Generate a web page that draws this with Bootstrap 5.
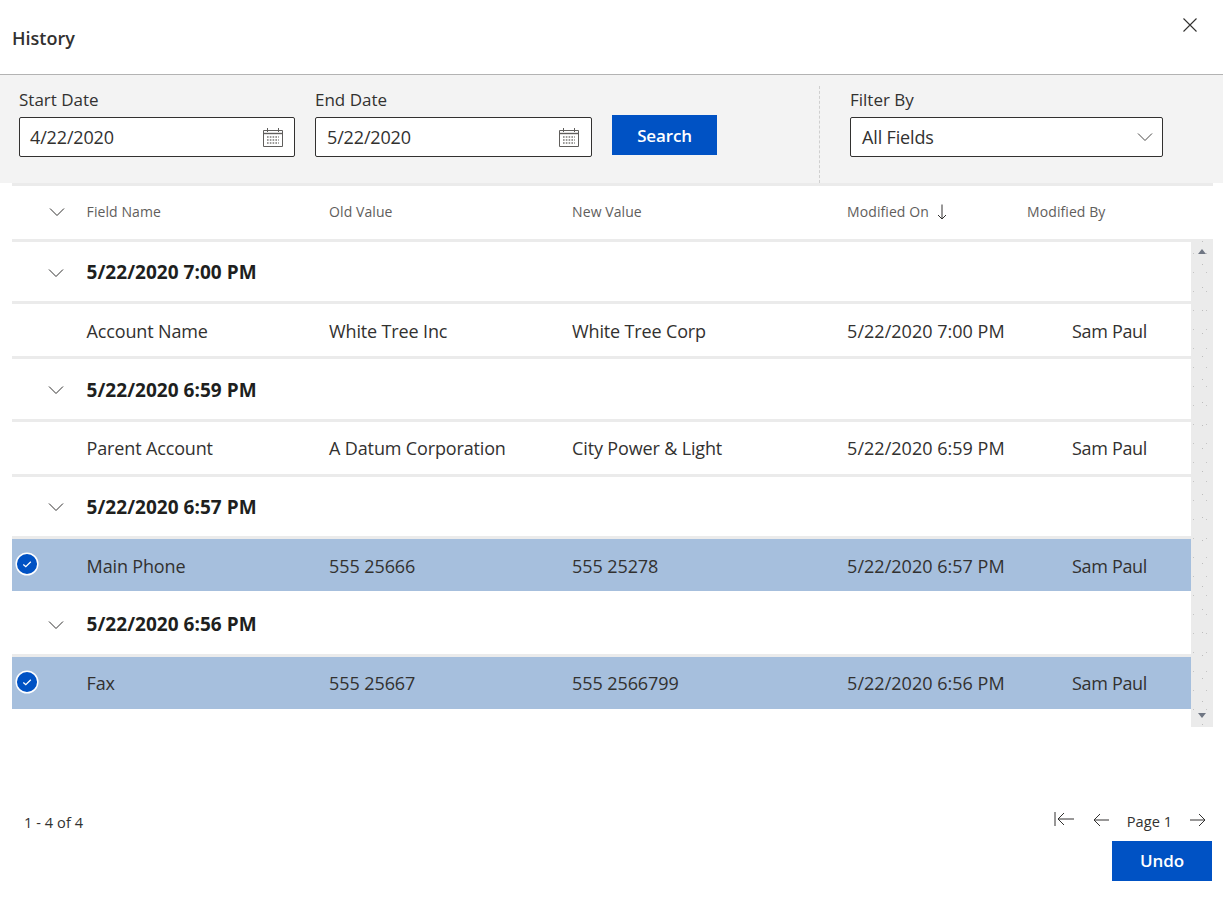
<!DOCTYPE html>
<html lang="en"><head><meta charset="utf-8"><title>History</title>
<link href="https://cdn.jsdelivr.net/npm/bootstrap@5.3.0/dist/css/bootstrap.min.css" rel="stylesheet">
<style>
html,body{height:910px;overflow:hidden;background:#fff}
body{font-family:"Open Sans","Noto Sans",sans-serif;color:#323130;font-size:17px;letter-spacing:-.15px}
.hist-head{height:74px;padding:0 12px}
.hist-title{font-size:18px;font-weight:600;margin:0;letter-spacing:0;line-height:77px;color:#323130}
.hist-close{background:none;border:0;padding:0;width:16px;height:16px;line-height:0;margin:17px 13px 0 0}
.hist-bar{height:109px;background:#f3f3f3;border-top:1px solid #b3b3b3;padding:0 0 0 19px}
.fld-label{font-size:17px;font-weight:500;line-height:24px;margin:13px 0 5px;color:#323130;letter-spacing:0}
.fld-box{height:40px;background:#fff;border:1px solid #323130;border-radius:2px;padding:0 11px 0 10px;font-size:18px;line-height:38px}
.w-start{width:276px;margin-right:20px;flex:none}.w-end{width:277px;margin-right:20px;flex:none}.w-filter{width:313px;flex:none}
.w-end .fld-box,.w-filter .fld-box{padding-left:11px}
.w-end .fld-box{padding-right:12px}.w-filter .fld-box{padding-right:9px}
.btn-ms{background:#0052c4;color:#fff;border:0;border-radius:0;font-weight:600;font-size:17px;height:40px;padding:0;letter-spacing:-.15px;flex:none}
.btn-ms:hover{background:#0052c4;color:#fff}
.btn-search{width:105px;margin-top:40px;padding-top:1px}
.vsep{border-left:1px dashed #cfcfcf;height:97px;margin:11px 30px 0 102px;flex:none}
.grid-wrap{margin:0 10px 0 12px;border-top:3px solid #ebebeb;height:59px;border-bottom:3px solid #ebebeb}
.col-hd{font-size:14px;color:#5f5e5c;letter-spacing:.08px;white-space:nowrap}
.hd-row{height:53px;padding-bottom:2px}
.gr-body{height:485px;margin:0 10px 0 12px}
.gr-list{width:1179px}
.gr-scroll{width:22px;background-color:#ebebeb;background-image:radial-gradient(circle,#bdbdbd .6px,transparent .8px),radial-gradient(circle,#c4c4c4 .6px,transparent .8px);background-size:17px 23px,13px 19px;background-position:3px 14px,9px 5px;margin-top:-3px;height:488px}
.tri-up,.tri-dn{width:0;height:0;border-left:4px solid transparent;border-right:4px solid transparent;display:block;margin:0 auto}
.tri-up{border-bottom:5px solid #6f7683;margin-top:10px}.tri-dn{border-top:5px solid #6f7683;margin-bottom:9px}
.group-row{height:59.4px;padding-top:1.8px;font-weight:700;font-size:19px;color:#201f1e;letter-spacing:.03px}
.data-row{height:49.8px;padding-top:2.2px;border-top:3px solid #ebebeb;border-bottom:3px solid #ebebeb;box-sizing:content-box;font-size:18px;display:flex;align-items:center;position:relative}
.data-row.sel{background:#a6bfdd;background-clip:padding-box;border-bottom-color:transparent}
.c-chk{width:74.6px;flex:none}.c-f{width:242.5px;flex:none}.c-o{width:243px;flex:none}.c-n{width:275px;flex:none}.c-m{width:225px;flex:none;letter-spacing:.02px}
.num{letter-spacing:-.1px}.who{letter-spacing:-.35px}
.chev{width:16px;height:10px;margin-left:36px;display:block}
.chev-hd{margin-left:37px}
.check-dot{position:absolute;left:3px;top:50%;margin-top:-13px;width:24px;height:24px}
.hist-foot{padding:84px 11px 0 24px}
.pager{font-size:14.6px;letter-spacing:0;gap:18px;padding-right:6px}
.pg-ic{margin-bottom:4px}.pg-first{margin-bottom:6px}
.btn-undo{width:100px;display:block;margin-top:8px}
.cnt{font-size:14.6px;letter-spacing:.05px;color:#323130;line-height:22px}
</style></head><body>
<div class="d-flex justify-content-between align-items-start hist-head">
  <h1 class="hist-title">History</h1>
  <button class="hist-close" aria-label="Close"><svg width="16" height="16" viewBox="0 0 16 16"><path d="M1.5 1.5l13 13M14.5 1.5l-13 13" stroke="#323130" stroke-width="1.1" fill="none"/></svg></button>
</div>
<div class="hist-bar d-flex align-items-start">
  <div class="w-start"><div class="fld-label">Start Date</div><div class="fld-box d-flex justify-content-between align-items-center"><span>4/22/2020</span><svg width="20" height="19" viewBox="0 0 20 19"><path d="M.5 2.5h19v16H.5z" fill="#fff" stroke="#605e5c"/><path d="M.5 5.500h19" stroke="#605e5c" stroke-width="1.4"/><path d="M4.5 0v4M15.5 0v4" stroke="#605e5c"/><path d="M4 9h12M4 12h12M4 15h12" stroke="#7a7876" stroke-width="1.4" stroke-dasharray="1.6 1.2"/></svg></div></div>
  <div class="w-end"><div class="fld-label">End Date</div><div class="fld-box d-flex justify-content-between align-items-center"><span>5/22/2020</span><svg width="20" height="19" viewBox="0 0 20 19"><path d="M.5 2.5h19v16H.5z" fill="#fff" stroke="#605e5c"/><path d="M.5 5.500h19" stroke="#605e5c" stroke-width="1.4"/><path d="M4.5 0v4M15.5 0v4" stroke="#605e5c"/><path d="M4 9h12M4 12h12M4 15h12" stroke="#7a7876" stroke-width="1.4" stroke-dasharray="1.6 1.2"/></svg></div></div>
  <button class="btn btn-ms btn-search">Search</button>
  <div class="vsep"></div>
  <div class="w-filter"><div class="fld-label">Filter By</div><div class="fld-box d-flex justify-content-between align-items-center"><span class="fw-medium">All Fields</span><svg width="16" height="10" viewBox="0 0 16 10"><path d="M1 1.5l7 7 7-7" stroke="#4a4947" fill="none"/></svg></div></div>
</div>
<div class="grid-wrap">
  <div class="d-flex align-items-center hd-row">
    <div class="c-chk"><svg class="chev chev-hd" viewBox="0 0 16 10"><path d="M1 1.5l7 7 7-7" stroke="#323130" fill="none"/></svg></div>
    <div class="c-f col-hd">Field Name</div><div class="c-o col-hd">Old Value</div><div class="c-n col-hd">New Value</div>
    <div class="col-hd d-flex align-items-center" style="width:180px">Modified On <svg class="ms-2" width="10" height="16" viewBox="0 0 10 16"><path d="M5 .5v14.500M1 11l4 4 4-4" stroke="#323130" fill="none"/></svg></div>
    <div class="col-hd">Modified By</div>
  </div>
</div>
<div class="d-flex gr-body">
  <div class="gr-list">
    <div class="d-flex align-items-center group-row"><div class="c-chk"><svg class="chev" viewBox="0 0 16 10"><path d="M1 1.5l7 7 7-7" stroke="#323130" fill="none"/></svg></div>5/22/2020 7:00 PM</div>
    <div class="data-row"><div class="c-chk"></div><div class="c-f">Account Name</div><div class="c-o">White Tree Inc</div><div class="c-n">White Tree Corp</div><div class="c-m">5/22/2020 7:00 PM</div><div class="who">Sam Paul</div></div>
    <div class="d-flex align-items-center group-row"><div class="c-chk"><svg class="chev" viewBox="0 0 16 10"><path d="M1 1.5l7 7 7-7" stroke="#323130" fill="none"/></svg></div>5/22/2020 6:59 PM</div>
    <div class="data-row"><div class="c-chk"></div><div class="c-f">Parent Account</div><div class="c-o">A Datum Corporation</div><div class="c-n">City Power &amp; Light</div><div class="c-m">5/22/2020 6:59 PM</div><div class="who">Sam Paul</div></div>
    <div class="d-flex align-items-center group-row"><div class="c-chk"><svg class="chev" viewBox="0 0 16 10"><path d="M1 1.5l7 7 7-7" stroke="#323130" fill="none"/></svg></div>5/22/2020 6:57 PM</div>
    <div class="data-row sel"><svg class="check-dot" viewBox="0 0 24 24"><circle cx="12" cy="12" r="10.8" fill="#0052c4" stroke="#fff" stroke-width="1.5"/><path d="M8.3 12.4l2.5 2.3 5-5" stroke="#fff" stroke-width="1.3" fill="none"/></svg><div class="c-chk"></div><div class="c-f">Main Phone</div><div class="c-o num">555 25666</div><div class="c-n num">555 25278</div><div class="c-m">5/22/2020 6:57 PM</div><div class="who">Sam Paul</div></div>
    <div class="d-flex align-items-center group-row"><div class="c-chk"><svg class="chev" viewBox="0 0 16 10"><path d="M1 1.5l7 7 7-7" stroke="#323130" fill="none"/></svg></div>5/22/2020 6:56 PM</div>
    <div class="data-row sel"><svg class="check-dot" viewBox="0 0 24 24"><circle cx="12" cy="12" r="10.8" fill="#0052c4" stroke="#fff" stroke-width="1.5"/><path d="M8.3 12.4l2.5 2.3 5-5" stroke="#fff" stroke-width="1.3" fill="none"/></svg><div class="c-chk"></div><div class="c-f">Fax</div><div class="c-o num">555 25667</div><div class="c-n num">555 2566799</div><div class="c-m">5/22/2020 6:56 PM</div><div class="who">Sam Paul</div></div>
  </div>
  <div class="gr-scroll d-flex flex-column justify-content-between"><span class="tri-up"></span><span class="tri-dn"></span></div>
</div>
<div class="d-flex justify-content-between hist-foot">
  <div class="cnt">1 - 4 of 4</div>
  <div>
    <div class="d-flex justify-content-end align-items-center pager">
      <svg class="pg-first" width="21" height="14" viewBox="0 0 21 14"><path d="M1 0v14M4 7h16M10 1L4 7l6 6" stroke="#323130" fill="none"/></svg>
      <svg class="pg-ic" width="16" height="14" viewBox="0 0 16 14"><path d="M1 7h15M7 1L1 7l6 6" stroke="#323130" fill="none"/></svg>
      <span>Page 1</span>
      <svg class="pg-ic" width="16" height="14" viewBox="0 0 16 14"><path d="M0 7h15M9 1l6 6-6 6" stroke="#323130" fill="none"/></svg>
    </div>
    <button class="btn btn-ms btn-undo ms-auto">Undo</button>
  </div>
</div>
<script src="https://cdn.jsdelivr.net/npm/bootstrap@5.3.0/dist/js/bootstrap.bundle.min.js"></script>
</body></html>
